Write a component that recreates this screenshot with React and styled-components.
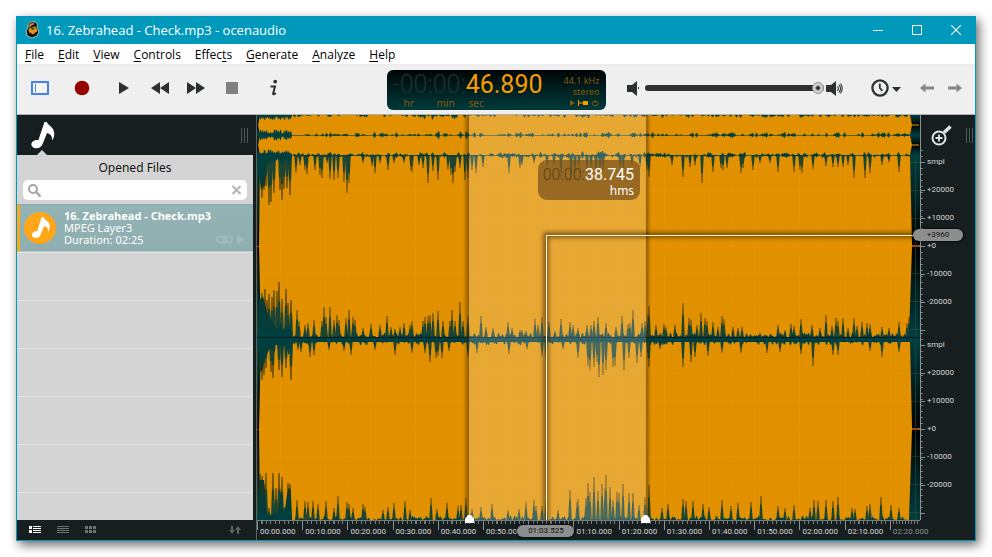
import React from "react";
import styled, { createGlobalStyle, css } from "styled-components";

const ui = `"Noto Sans", "Open Sans", sans-serif`;
const heading = `"Open Sans", "Noto Sans", sans-serif`;
const digits = `Roboto, "Liberation Sans", sans-serif`;

const GlobalStyle = createGlobalStyle`
  *, *::before, *::after { box-sizing: border-box; }
  body { margin: 0; background: #fff; font-family: ${ui}; }
  button { font: inherit; color: inherit; background: none; border: 0; padding: 0; margin: 0; cursor: pointer; }
  svg { display: block; }
  ul { list-style: none; margin: 0; padding: 0; }
`;

/* ---------- window ---------- */

const Desktop = styled.div`
  min-height: 100vh;
  padding: 16px;
  display: flex;
`;

const Window = styled.main`
  flex: 1;
  min-width: 0;
  display: flex;
  flex-direction: column;
  border: 1px solid #0099bc;
  border-top: 0;
  background: #161e1f;
  box-shadow: 3px 4px 10px rgba(0, 0, 0, 0.6);
`;

const TitleBar = styled.header`
  height: 28px;
  padding: 0 5px 0 8px;
  display: flex;
  align-items: center;
  gap: 5px;
  background: #0099bc;
  color: #fff;
`;

const Title = styled.h1`
  flex: 1;
  margin: 0;
  font-family: ${heading};
  font-size: 13px;
  font-weight: 400;
  line-height: 20px;
`;

const WindowButton = styled.button`
  width: 29px;
  height: 28px;
  margin-left: 5px;
  display: grid;
  place-items: center;
`;

const MenuBar = styled.nav`
  height: 21px;
  padding: 1px 8px 0;
  display: flex;
  align-items: center;
  gap: 14px;
  background: #fff;
  border-bottom: 1px solid #ececec;
`;

const MenuItem = styled.button`
  font-family: ${heading};
  font-size: 12px;
  line-height: 18px;
  color: #000;
  u { text-underline-offset: 2px; }
`;

/* ---------- toolbar ---------- */

const Toolbar = styled.div`
  height: 50px;
  display: grid;
  grid-template-columns: minmax(0, 1fr) 219px minmax(0, 1fr);
  align-items: center;
  background: #efefef;
  border-bottom: 1px solid #b0b0b0;
`;

const ToolGroup = styled.div`
  display: flex;
  align-items: center;
`;

const LeftTools = styled(ToolGroup)`
  gap: 6px;
  padding: 0 0 3px 5px;
`;

const RightTools = styled(ToolGroup)`
  padding: 0 6px 3px 21px;
`;

const HistoryTools = styled(ToolGroup)`
  padding-left: 25px;
`;

const ToolButton = styled.button`
  width: ${(p) => p.$w || 36}px;
  height: 30px;
  display: grid;
  place-items: center;
`;

const HistoryButton = styled(ToolButton)`
  margin-right: 9px;
`;

const Display = styled.section`
  height: 40px;
  padding: 0 6px;
  display: flex;
  justify-content: space-between;
  border-radius: 6px;
  background: linear-gradient(#000506, #003a3a);
  color: #84590f;
`;

const Clock = styled.div`
  font-family: ${digits};
  font-size: 25px;
  line-height: 24px;
  padding: 3px 0 0;
  color: #f79c00;
  white-space: nowrap;
  span { color: #1d3233; font-weight: 300; }
`;

const Units = styled.div`
  padding-left: 11px;
  display: grid;
  grid-template-columns: 33px 32px 1fr;
  font-size: 10px;
  line-height: 12px;
`;

const Format = styled.div`
  padding-top: 5px;
  display: flex;
  flex-direction: column;
  align-items: flex-end;
  font-size: 9px;
  line-height: 11px;
  white-space: nowrap;
`;

const Slider = styled.input`
  flex: 1;
  min-width: 0;
  height: 14px;
  margin: 0 2px 0 6px;
  appearance: none;
  background: none;
  &::-webkit-slider-runnable-track {
    height: 6px;
    border-radius: 3px;
    background: #2d302f;
  }
  &::-webkit-slider-thumb {
    appearance: none;
    width: 12px;
    height: 12px;
    margin-top: -3px;
    border-radius: 50%;
    border: 1px solid #8e8e8e;
    background: radial-gradient(circle, #222 0 1px, #cfcfcf 3px);
  }
`;

/* ---------- body ---------- */

const Body = styled.div`
  flex: 1;
  min-height: 425px;
  display: grid;
  grid-template-columns: 236px minmax(0, 1fr) 55px;
`;

const Sidebar = styled.aside`
  display: flex;
  flex-direction: column;
`;

const SideTabs = styled.div`
  height: 40px;
  padding: 0 4px 0 8px;
  display: flex;
  align-items: center;
  justify-content: space-between;
`;

const Tab = styled.button`
  align-self: stretch;
  width: 34px;
  display: flex;
  flex-direction: column;
  align-items: center;
  justify-content: space-between;
  padding-top: 6px;
`;

const Grip = styled.div`
  width: 8px;
  height: 15px;
  background: repeating-linear-gradient(90deg, #50595a 0 1px, transparent 1px 3px);
`;

const Files = styled.section`
  flex: 1;
  display: flex;
  flex-direction: column;
  background: #d4d4d4;
`;

const FilesTitle = styled.h2`
  margin: 0;
  font-size: 12px;
  font-weight: 400;
  line-height: 25px;
  text-align: center;
  color: #141414;
`;

const Search = styled.label`
  height: 20px;
  margin: 0 6px 4px;
  padding: 0 5px;
  display: flex;
  align-items: center;
  border-radius: 5px;
  background: #fff;
`;

const SearchInput = styled.input`
  flex: 1;
  min-width: 0;
  height: 18px;
  padding: 0 4px;
  border: 0;
  outline: 0;
  background: none;
  font: 12px ${ui};
`;

const FileList = styled.ul`
  flex: 1;
  background: repeating-linear-gradient(#e4e4e4 0 1px, #d4d4d4 1px 48px);
`;

const FileRow = styled.li`
  height: 48px;
  padding: 0 8px 1px 4px;
  display: flex;
  align-items: center;
  gap: 8px;
  border-left: 3px solid #ffa619;
  border-top: 1px solid #86aeae;
  border-bottom: 1px solid #b9cccc;
  background: linear-gradient(#93b3b4, #8eaeaf);
  color: #fff;
`;

const FileInfo = styled.div`
  flex: 1;
  font-size: 11px;
  line-height: 12px;
  white-space: nowrap;
  strong { display: block; font-family: ${heading}; font-weight: 700; }
`;

const FileMarks = styled.div`
  align-self: flex-end;
  display: flex;
  gap: 4px;
  padding-bottom: 5px;
  margin-left: -40px;
`;

const SideFooter = styled.footer`
  height: 20px;
  padding: 0 12px;
  display: flex;
  align-items: center;
  gap: 16px;
  button:last-child { margin-left: auto; }
`;

const Editor = styled.section`
  margin-left: 3px;
  border-left: 1px solid #5c6364;
  display: flex;
  flex-direction: column;
  min-width: 0;
`;

const WaveArea = styled.div`
  position: relative;
  flex: 1;
  min-height: 0;
`;

const WaveSvg = styled.svg`
  position: absolute;
  inset: 0;
  width: 100%;
  height: 100%;
`;

const Ruler = styled.div`
  position: relative;
  height: 20px;
  border-top: 1px solid #777d7e;
  display: grid;
  grid-template-columns: repeat(14, minmax(0, 3fr)) minmax(0, 2fr);
`;

const smallText = css`
  font-family: ${digits};
  font-size: 8px;
  line-height: 12px;
  white-space: nowrap;
`;

const TimeMark = styled.div`
  ${smallText}
  padding: 5px 0 0 3px;
  color: ${(p) => (p.$dim ? "#8b9091" : "#d6d8d8")};
  background:
    linear-gradient(#8b9091, #8b9091) 0 0 / 1px 9px no-repeat,
    repeating-linear-gradient(90deg, #747a7b 0 1px, transparent 1px 10%) 0 0 / 100% 3px no-repeat;
`;

const Pill = styled.output`
  ${smallText}
  position: absolute;
  z-index: 2;
  border-radius: 6px;
  background: #8d8f8e;
  color: #111;
  text-align: center;
  box-shadow: 0 0 3px #000;
`;

const TimePill = styled(Pill)`
  left: 43.5%;
  top: 4px;
  width: 57px;
  margin-left: -28px;
`;

const LevelPill = styled(Pill)`
  left: -8px;
  top: 28.2%;
  width: 50px;
`;

const Hint = styled.div`
  position: absolute;
  left: 42.4%;
  top: 11.2%;
  width: 102px;
  height: 40px;
  padding: 6px 6px 0 4px;
  border-radius: 9px;
  background: rgba(120, 82, 28, 0.72);
  color: #fff;
  text-align: right;
  font-size: 12px;
  line-height: 13px;
`;

const HintTime = styled.div`
  font-family: ${digits};
  font-size: 16px;
  line-height: 18px;
  white-space: nowrap;
  span { color: #5a4015; font-weight: 300; }
`;

const Handle = styled.button`
  position: absolute;
  z-index: 1;
  left: ${(p) => p.$at}%;
  bottom: -3px;
  margin-left: -5px;
`;

const Scale = styled.aside`
  display: flex;
  flex-direction: column;
`;

const ScaleBody = styled.div`
  position: relative;
  flex: 1;
  margin-bottom: 20px;
  padding-top: 33px;
  border-left: 1px solid #8b9091;
`;

const ScaleTools = styled.div`
  position: absolute;
  inset: 0 1px auto 10px;
  height: 41px;
  display: flex;
  align-items: center;
  justify-content: space-between;
`;

const Channel = styled.ul`
  height: 183px;
  padding-bottom: 15px;
  background:
    repeating-linear-gradient(#8b9091 0 1px, transparent 1px 28px) 0 14px / 4px 169px no-repeat,
    repeating-linear-gradient(#747a7b 0 1px, transparent 1px 6px) 0 2px / 2px 181px no-repeat;
`;

const Level = styled.li`
  ${smallText}
  height: 28px;
  line-height: 28px;
  padding-left: 6px;
  color: #d6d8d8;
`;

/* ---------- waveform data: [time position, peak position] ---------- */

const topPeaks = [
  [262,198],[264,190],[266,186],[269,205],[271,202],[274,193],[280,190],[282,200],[284,189],[287,188],[290,195],[296,173],[300,165],[305,170],[307,174],[315,170],[320,175],[322,178],[327,163],[330,179],[334,180],[338,178],[344,182],[347,193],[349,183],[363,163],[372,166],[375,173],[380,163],[388,170],[394,163],[404,163],[411,170],[412,172],[419,165],[423,168],[428,183],[433,171],[438,180],[448,170],[451,175],[453,183],[455,172],[460,168],[465,180],[468,178],[472,170],[476,173],[483,167],[509,173],[520,168],[522,165],[534,163],[547,167],[554,165],[561,177],[571,180],[575,173],[579,167],[587,173],[591,168],[596,175],[600,173],[603,172],[620,168],[623,173],[632,165],[640,167],[647,170],[649,177],[672,165],[683,177],[690,167],[695,165],[702,183],[713,172],[721,168],[723,170],[727,168],[741,173],[743,168],[753,170],[760,163],[770,163],[778,172],[794,172],[800,170],[802,173],[813,169],[826,166],[833,167],[838,167],[843,167],[848,165],[854,178],[865,178],[870,173],[882,165],[889,162],[899,172],
];
const midUpPeaks = [
  [262,293],[265,289],[267,300],[269,294],[272,297],[274,290],[277,291],[279,282],[282,299],[286,289],[288,303],[291,300],[297,310],[299,321],[305,325],[308,323],[314,320],[322,321],[324,307],[326,317],[330,307],[334,320],[337,315],[339,320],[346,318],[349,310],[353,317],[355,320],[363,328],[371,324],[380,325],[387,316],[391,327],[395,329],[400,327],[404,323],[410,325],[412,321],[423,321],[425,317],[428,316],[430,315],[433,313],[438,311],[443,321],[450,321],[452,310],[455,321],[460,302],[463,321],[468,316],[481,316],[486,327],[493,328],[508,322],[512,328],[520,330],[522,330],[526,331],[535,319],[538,325],[542,317],[549,322],[555,331],[561,319],[570,322],[573,325],[578,328],[587,325],[591,325],[594,321],[598,317],[606,323],[616,327],[622,316],[628,324],[630,323],[633,310],[642,323],[645,321],[648,315],[649,306],[656,325],[664,324],[666,327],[675,325],[683,303],[689,318],[691,320],[697,325],[701,313],[705,318],[707,321],[713,322],[718,327],[722,316],[724,319],[733,327],[738,328],[742,327],[760,333],[778,325],[785,330],[791,324],[794,326],[801,319],[812,325],[820,328],[826,315],[832,326],[836,318],[838,321],[843,318],[848,328],[854,318],[857,326],[862,322],[867,323],[870,324],[882,327],[889,328],[899,322],[907,323],[909,317],
];
const midDownPeaks = [
  [260,372],[262,380],[264,375],[266,368],[271,372],[273,378],[279,370],[282,377],[286,368],[291,380],[298,350],[301,352],[310,357],[314,355],[329,350],[344,351],[351,355],[375,350],[395,355],[412,353],[425,353],[430,362],[436,358],[438,356],[442,358],[449,351],[468,357],[477,353],[509,354],[527,349],[542,356],[546,358],[563,349],[578,358],[588,366],[590,370],[594,367],[597,362],[599,377],[603,375],[606,370],[613,367],[615,366],[624,370],[629,358],[637,363],[641,357],[648,358],[649,367],[660,349],[683,367],[691,362],[695,357],[708,356],[722,353],[741,353],[767,353],[780,352],[801,354],[813,366],[833,355],[838,355],[870,351],[882,357],[899,352],
];
const bottomPeaks = [
  [260,474],[262,476],[264,484],[266,473],[269,508],[273,473],[276,488],[279,473],[282,477],[288,483],[290,484],[297,500],[305,501],[308,502],[313,501],[318,504],[326,501],[334,508],[338,496],[347,502],[349,504],[353,508],[363,504],[365,507],[383,510],[388,507],[394,503],[405,501],[410,510],[431,498],[437,509],[447,503],[458,506],[461,505],[466,498],[472,509],[481,507],[492,504],[508,510],[519,509],[526,502],[534,500],[536,506],[542,506],[546,503],[558,510],[570,490],[577,502],[578,499],[586,498],[588,483],[590,492],[594,477],[598,491],[602,484],[605,488],[606,475],[610,487],[613,500],[617,492],[619,493],[623,484],[629,493],[633,493],[639,505],[645,497],[649,485],[662,508],[668,504],[683,499],[686,501],[693,501],[703,504],[709,507],[722,500],[731,506],[738,503],[751,502],[761,496],[778,506],[785,508],[794,505],[810,508],[814,500],[818,501],[826,500],[833,501],[838,497],[852,508],[855,509],[867,506],[870,504],[881,497],[891,505],[899,508],
];

function noise(seed) {
  let s = seed;
  return () => {
    s = (s * 1103515245 + 12345) % 2147483648;
    return s / 2147483648;
  };
}

/* Low noise along a base line, between the peaks. */
function floorNoise(base, dir, size, seed) {
  const rnd = noise(seed);
  let d = "";
  for (let x = 258; x < 911; x += 2) {
    const r = rnd();
    const h = (x < 292 ? 4 + 6 * r : 0) + size * r * r;
    d += `M${x - 1} ${base}L${x} ${base + dir * h}H${x + 1}L${x + 2} ${base}Z`;
  }
  return d;
}

/* One spike per peak; `reach` is the share of the height that is drawn. */
function spikes(peaks, base, reach, half) {
  return peaks
    .map(([x, y]) => {
      const tip = base + (y - base) * reach;
      const w = x < 292 ? half + 0.3 : half;
      return `M${x - w} ${base}L${x - w * 0.5} ${tip}H${x + w * 0.5}L${x + w} ${base}Z`;
    })
    .join("");
}

function Peaks({ peaks, base, dir, size, seed }) {
  return (
    <>
      <path d={spikes(peaks, base, 1, 1.3)} fill="#2b2e10" opacity="0.6" />
      <path d={spikes(peaks, base, 0.65, 1.8)} opacity="0.75" />
      <path d={floorNoise(base, dir, size, seed)} />
    </>
  );
}

/* Two-sided ripple around a line in the overview strip. */
function ripple(y, size, seed) {
  const rnd = noise(seed);
  let d = "";
  for (let x = 260; x < 911; x += 2) {
    const busy = (x > 420 && x < 470) || (x > 580 && x < 625);
    const r = rnd();
    const h = x < 292 ? size * (0.6 + 1.2 * r) : size * (busy ? 1.4 : 0.9) * r * r * r;
    if (h > 0.4) d += `M${x - 1} ${y}L${x} ${y - h}H${x + 1}L${x + 2} ${y}L${x + 1} ${y + h}H${x}Z`;
  }
  return d;
}

const TEAL = "#003f40";
const gridX = Array.from({ length: 29 }, (_, i) => 257 + Math.round(i * 22.6));
const gridY = [162, 190, 218, 273, 301, 329, 373, 401, 456, 484, 512];

function Waveform() {
  return (
    <WaveSvg viewBox="257 115 663 405" preserveAspectRatio="none" role="img" aria-label="Waveform">
      <defs>
        <linearGradient id="channel" x1="0" y1="0" x2="0" y2="1">
          <stop offset="0" stopColor={TEAL} />
          <stop offset="0.5" stopColor="#000" />
          <stop offset="1" stopColor={TEAL} />
        </linearGradient>
        <linearGradient id="edgeLeft">
          <stop offset="0" stopColor="#3a2400" stopOpacity="0" />
          <stop offset="1" stopColor="#3a2400" stopOpacity="0.5" />
        </linearGradient>
        <linearGradient id="edgeRight">
          <stop offset="0" stopColor="#3a2400" stopOpacity="0.5" />
          <stop offset="1" stopColor="#3a2400" stopOpacity="0" />
        </linearGradient>
        <filter id="soft" x="530" y="225" width="400" height="300" filterUnits="userSpaceOnUse">
          <feGaussianBlur stdDeviation="2" />
        </filter>
      </defs>

      <rect x="257" y="115" width="663" height="20" fill="url(#channel)" />
      <rect x="257" y="135" width="663" height="20" fill="url(#channel)" />
      <rect x="257" y="155" width="663" height="182" fill="url(#channel)" />
      <rect x="257" y="338" width="663" height="182" fill="url(#channel)" />

      <g fill="#e19100">
        <path d="M260 115H910L912 125L910 135H260L258 125Z" />
        <path d="M260 135H910L912 145L910 155H260L258 145Z" />
        <path d="M260 155H910L912 246L909 337H261L259 246Z" />
        <path d="M261 341H910L912 429L909 520H260L259 429Z" />
      </g>

      <g fill="#f0a21a" opacity="0.14">
        {gridX.map((x) => <rect key={x} x={x} y="165" width="1" height="355" />)}
        {gridY.map((y) => <rect key={y} x="260" y={y} width="660" height="1" />)}
      </g>
      <g fill="#f58a00">
        <rect x="257" y="246" width="655" height="1" opacity="0.6" />
        <rect x="257" y="429" width="655" height="1" opacity="0.4" />
        <rect x="912" y="245" width="8" height="2" fill="#a4500c" />
        <rect x="912" y="428" width="8" height="2" fill="#a4500c" />
        <rect x="912" y="124" width="7" height="2" fill="#7a5000" />
        <rect x="912" y="144" width="7" height="2" fill="#7a5000" />
      </g>
      <rect x="915" y="155" width="1" height="365" fill="#2b4446" opacity="0.7" />

      <g fill={TEAL}>
        <path d={ripple(115, 3, 11)} />
        <path d={ripple(135, 3, 29)} />
        <path d={ripple(155, 3, 47)} />
        <rect x="260" y="135" width="651" height="1" opacity="0.6" />
        <rect x="260" y="155" width="651" height="1" opacity="0.6" />
        <path d="M257 155H270V160L267 164L265 185L261 190L259 174L257 180Z" />
        <Peaks peaks={topPeaks} base={155} dir={1} size={3} seed={5} />
        <path d="M259 337V300L263 296L267 312L276 328L292 332V337Z" />
        <Peaks peaks={midUpPeaks} base={337} dir={-1} size={4} seed={71} />
        <rect x="257" y="337" width="663" height="5" />
        <path d="M259 342H280L270 348L265 358L262 372L259 368Z" />
        <Peaks peaks={midDownPeaks} base={341} dir={1} size={4} seed={93} />
        <path d="M259 520V480L264 480L267 515H278L281 487L284 516L288 488L291 490V520Z" />
        <Peaks peaks={bottomPeaks} base={520} dir={-1} size={4} seed={131} />
      </g>
      <rect x="257" y="337" width="663" height="1" fill="#0b1a1b" />

      <rect x="463" y="115" width="6" height="405" fill="url(#edgeLeft)" />
      <rect x="469" y="115" width="177" height="405" fill="#fff" opacity="0.2" />
      <rect x="646" y="115" width="5" height="405" fill="url(#edgeRight)" />

      <path d="M546 520V235H920" fill="none" stroke="#2a1b00" strokeWidth="5" opacity="0.6" filter="url(#soft)" />
      <path d="M546.5 520V235.5H920" fill="none" stroke="#fff3d8" strokeWidth="1" />
    </WaveSvg>
  );
}

/* ---------- icons ---------- */

const AppIcon = () => (
  <svg width="16" height="18" viewBox="0 0 16 18">
    <path d="M3 7C2 2 6 0 9 1c3 0 4 3 3 5l2 5-2 4-5 2-5-2-1-5Z" fill="#161616" stroke="#cfd8d8" strokeWidth="0.8" />
    <path d="M4 6c0-3 3-4 5-3M5 7l5-1 2 4-2 2-4 1-2-3Z" fill="#e09a18" stroke="#e09a18" />
    <path d="M6 7l3 1M5 12l2 2h3l1-3" stroke="#161616" strokeWidth="1.4" fill="none" />
  </svg>
);
const PanelIcon = () => (
  <svg width="18" height="14" viewBox="0 0 18 14">
    <rect x="1" y="1" width="16" height="12" fill="#f3f3f3" stroke="#4c7fe8" strokeWidth="2" />
    <path d="M4.5 3v8" stroke="#4c7fe8" />
  </svg>
);
const RecordIcon = () => (
  <svg width="16" height="16"><circle cx="8" cy="8" r="7.3" fill="#960000" /></svg>
);
const PlayIcon = () => (
  <svg width="12" height="14"><path d="M1 1v12l10-6Z" fill="#2d3030" /></svg>
);
const RewindIcon = () => (
  <svg width="18" height="12"><path d="M9 0v12L0 6ZM18 0v12L9 6Z" fill="#2d3030" /></svg>
);
const ForwardIcon = () => (
  <svg width="18" height="12"><path d="M0 0v12l9-6ZM9 0v12l9-6Z" fill="#2d3030" /></svg>
);
const StopIcon = () => (
  <svg width="12" height="12"><rect width="12" height="12" fill="#808080" /></svg>
);
const InfoIcon = () => (
  <svg width="10" height="18" viewBox="0 0 10 18">
    <circle cx="6.2" cy="2.6" r="1.9" fill="#2d3030" />
    <path d="M1.5 7.5H6L4.2 14.3c-.3 1.4 1.1 1.2 2.6-.2" fill="none" stroke="#2d3030" strokeWidth="2" />
  </svg>
);
const SpeakerIcon = ({ loud }) => (
  <svg width={loud ? 17 : 12} height="15" viewBox={loud ? "0 0 17 15" : "0 0 12 15"}>
    <path d="M0 4h5l5-4v15l-5-4H0Z" fill="#2d3030" />
    {loud ? (
      <path d="M11.5 5q1.6 2.5 0 5M13 3.5q3 4 0 8M14.5 2.5q3.4 5 0 10" fill="none" stroke="#2d3030" strokeWidth="1.1" />
    ) : (
      <rect x="11" y="6" width="1" height="2" fill="#2d3030" />
    )}
  </svg>
);
const HistoryIcon = () => (
  <svg width="30" height="18" viewBox="0 0 30 18">
    <circle cx="9" cy="9" r="7.6" fill="none" stroke="#2d3030" strokeWidth="2.3" />
    <path d="M8.8 4.5V9l2.6 2.8" fill="none" stroke="#2d3030" strokeWidth="1.8" />
    <path d="M21 8h9l-4.5 5Z" fill="#2d3030" />
  </svg>
);
const ArrowIcon = ({ right }) => (
  <svg width="14" height="10" viewBox="0 0 14 10">
    <path d={right ? "M0 3.5h8.5V.5L14 5 8.5 9.5v-3H0Z" : "M14 3.5H5.5V.5L0 5l5.5 4.5v-3H14Z"} fill="#858585" />
  </svg>
);
const NoteIcon = () => (
  <svg width="25" height="28" viewBox="0 0 25 28">
    <path d="M14.5 1h2.4c.8 3.2 6.4 4.6 7.3 10.5.4 3-.6 6-2.2 8 .4-4.5-1.2-6.5-5-7.5l-4 10c-1.200 4-4.500 6-8 5.200C1.300 26.400.4 23 2.500 20.800c1.800-1.900 4.300-2 5.800-1.600Z" fill="#fff" />
  </svg>
);
const FileNote = () => (
  <svg width="32" height="32" viewBox="0 0 32 32">
    <circle cx="16" cy="16" r="16" fill="#ffa619" />
    <path d="M17.5 5h1.8c.6 2.6 5.7 3.8 6.4 8.5.3 2.5-.5 4.8-1.7 6.2.3-3.5-1-5-3.8-5.800l-3.300 8c-1 3-3.500 4.500-6.200 3.900-3-.7-3.400-3.500-1.700-5.300 1.300-1.400 3.100-1.500 4.300-1.200Z" fill="#fff" />
  </svg>
);
const ZoomIcon = () => (
  <svg width="21" height="21" viewBox="0 0 21 21" fill="none" stroke="#e4e6e6">
    <circle cx="8" cy="13" r="6.5" strokeWidth="2" />
    <path d="M8 9.5v7M4.5 13h7" strokeWidth="1.8" />
    <path d="M13 7.5L19.5 1.5" strokeWidth="3.5" />
  </svg>
);

const menus = [["", "F", "ile"], ["", "E", "dit"], ["", "V", "iew"], ["", "C", "ontrols"], ["Effec", "t", "s"], ["", "G", "enerate"], ["", "A", "nalyze"], ["", "H", "elp"]];
const times = ["00:00.000", "00:10.000", "00:20.000", "00:30.000", "00:40.000", "00:50.000", "01:00.000", "01:10.000", "01:20.000", "01:30.000", "01:40.000", "01:50.000", "02:00.000", "02:10.000", "02:20.000"];
const levels = ["smpl", "+20000", "+10000", "+0", "-10000", "-20000"];

export default function App() {
  return (
    <Desktop>
      <GlobalStyle />
      <Window>
        <TitleBar>
          <AppIcon />
          <Title>16. Zebrahead - Check.mp3 - ocenaudio</Title>
          <WindowButton aria-label="Minimize">
            <svg width="10" height="10"><path d="M0 5.5h10" stroke="#fff" /></svg>
          </WindowButton>
          <WindowButton aria-label="Maximize">
            <svg width="10" height="10"><rect x="0.5" y="0.5" width="9" height="9" fill="none" stroke="#fff" /></svg>
          </WindowButton>
          <WindowButton aria-label="Close">
            <svg width="10" height="10"><path d="M0 0l10 10M10 0L0 10" stroke="#fff" strokeWidth="1.1" /></svg>
          </WindowButton>
        </TitleBar>

        <MenuBar>
          {menus.map(([a, key, b]) => (
            <MenuItem key={a + key + b}>{a}<u>{key}</u>{b}</MenuItem>
          ))}
        </MenuBar>

        <Toolbar>
          <LeftTools>
            <ToolButton aria-label="Toggle side panel"><PanelIcon /></ToolButton>
            <ToolButton aria-label="Record"><RecordIcon /></ToolButton>
            <ToolGroup>
              <ToolButton aria-label="Play"><PlayIcon /></ToolButton>
              <ToolButton aria-label="Rewind"><RewindIcon /></ToolButton>
              <ToolButton aria-label="Fast forward"><ForwardIcon /></ToolButton>
              <ToolButton aria-label="Stop"><StopIcon /></ToolButton>
            </ToolGroup>
            <ToolButton aria-label="Information"><InfoIcon /></ToolButton>
          </LeftTools>

          <Display>
            <div>
              <Clock><span>-00:00:</span>46.890</Clock>
              <Units><span>hr</span><span>min</span><span>sec</span></Units>
            </div>
            <Format>
              <span>44.1 kHz</span>
              <span>stereo</span>
              <svg width="32" height="12" viewBox="0 0 32 12">
                <path d="M2 3v6l5-3Z" fill="#84590f" />
                <path d="M10.5 3v6M11 6h5" stroke="#f79c00" />
                <rect x="15" y="4" width="5" height="4" fill="#f79c00" />
                <path d="M26 4.5c-3 1-2 4 1 4h1c3 0 3.5-3 .5-4h-2M27 3v3" fill="none" stroke="#84590f" />
              </svg>
            </Format>
          </Display>

          <RightTools>
            <SpeakerIcon />
            <Slider type="range" min="0" max="100" defaultValue="100" aria-label="Volume" />
            <SpeakerIcon loud />
            <HistoryTools>
              <HistoryButton aria-label="History"><HistoryIcon /></HistoryButton>
              <ToolButton $w={28} aria-label="Back"><ArrowIcon /></ToolButton>
              <ToolButton $w={28} aria-label="Forward"><ArrowIcon right /></ToolButton>
            </HistoryTools>
          </RightTools>
        </Toolbar>

        <Body>
          <Sidebar>
            <SideTabs>
              <Tab aria-label="Opened files">
                <NoteIcon />
                <svg width="10" height="5"><path d="M0 5L5 0l5 5Z" fill="#d4d4d4" /></svg>
              </Tab>
              <Grip />
            </SideTabs>
            <Files>
              <FilesTitle>Opened Files</FilesTitle>
              <Search>
                <svg width="13" height="13" fill="none" stroke="#a6a6a6"><circle cx="5" cy="5" r="4" strokeWidth="2" /><path d="M8 8l4.5 4.5" strokeWidth="2.4" /></svg>
                <SearchInput type="text" aria-label="Search files" />
                <button type="button" aria-label="Clear search">
                  <svg width="11" height="10"><path d="M1.5 1l8 8M9.5 1l-8 8" stroke="#b5b5b5" strokeWidth="2.2" /></svg>
                </button>
              </Search>
              <FileList>
                <FileRow>
                  <FileNote />
                  <FileInfo>
                    <strong>16. Zebrahead - Check.mp3</strong>
                    <div>MPEG Layer3</div>
                    <div>Duration: 02:25</div>
                  </FileInfo>
                  <FileMarks>
                    <svg width="17" height="10" fill="none" stroke="#a3bcbd" strokeWidth="2"><rect x="1" y="1.5" width="9" height="6" rx="3" /><rect x="7" y="1.5" width="9" height="6" rx="3" /></svg>
                    <svg width="8" height="10"><path d="M0 0v9l8-4.5Z" fill="#a3bcbd" /></svg>
                  </FileMarks>
                </FileRow>
              </FileList>
            </Files>
            <SideFooter>
              <button aria-label="Detailed list">
                <svg width="12" height="8" fill="#fff"><path d="M0 0h3v3H0zM0 4h3v3H0zM4 0h8v1H4zM4 2h8v1H4zM4 4h8v1H4zM4 6h8v1H4z" /></svg>
              </button>
              <button aria-label="Simple list">
                <svg width="12" height="8" fill="#6d7374"><path d="M0 0h12v1H0zM0 2h12v1H0zM0 4h12v1H0zM0 6h12v1H0z" /></svg>
              </button>
              <button aria-label="Grid">
                <svg width="12" height="8" fill="#6d7374"><path d="M0 0h3v3H0zM4 0h3v3H4zM8 0h3v3H8zM0 4h3v3H0zM4 4h3v3H4zM8 4h3v3H8z" /></svg>
              </button>
              <button aria-label="Sort">
                <svg width="12" height="8" fill="#5d6364"><path d="M2 0h2v4h2L3 8 0 4h2zM8 8h2V4h2L9 0 6 4h2z" /></svg>
              </button>
            </SideFooter>
          </Sidebar>

          <Editor>
            <WaveArea>
              <Waveform />
              <Hint>
                <HintTime><span>00:00:</span>38.745</HintTime>
                hms
              </Hint>
              {[32.1, 58.6].map((at) => (
                <Handle key={at} $at={at} aria-label="Selection edge">
                  <svg width="9" height="8"><path d="M0 8V3.5L3 0h3l3 3.5V8Z" fill="#fff" /></svg>
                </Handle>
              ))}
            </WaveArea>
            <Ruler>
              {times.map((t) => (
                <TimeMark key={t} $dim={t === "02:20.000"}>{t}</TimeMark>
              ))}
              <TimePill>01:03.525</TimePill>
            </Ruler>
          </Editor>

          <Scale>
            <ScaleBody>
              <ScaleTools>
                <button aria-label="Zoom"><ZoomIcon /></button>
                <Grip />
              </ScaleTools>
              <Channel>{levels.map((l) => <Level key={l}>{l}</Level>)}</Channel>
              <Channel>{levels.map((l) => <Level key={l}>{l}</Level>)}</Channel>
              <LevelPill>+3960</LevelPill>
            </ScaleBody>
          </Scale>
        </Body>
      </Window>
    </Desktop>
  );
}
